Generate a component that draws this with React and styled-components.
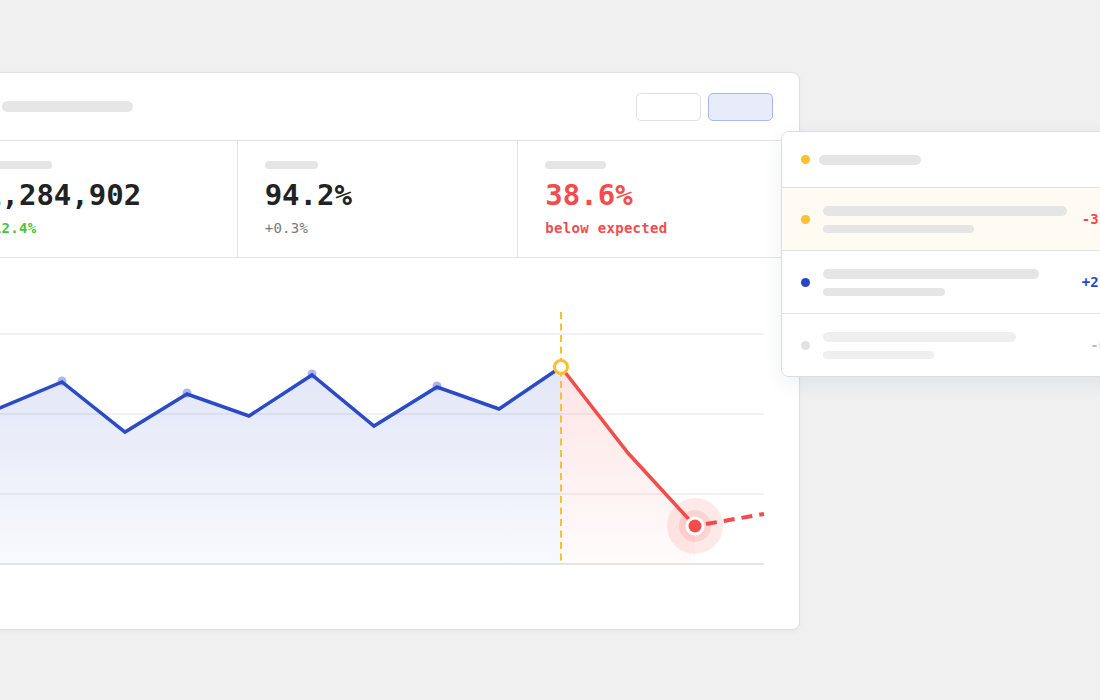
import styled, { createGlobalStyle } from "styled-components";

const GlobalStyle = createGlobalStyle`
  * { box-sizing: border-box; }
  body {
    margin: 0;
    background: #f0f0f0;
    font-family: "DejaVu Sans Mono", "Liberation Mono", monospace;
    overflow: hidden;
  }
`;

const Stage = styled.div`
  position: relative;
  width: 1100px;
  height: 700px;
  overflow: hidden;
  padding-top: 72px;
`;

const Card = styled.div`
  margin-left: -44px;
  width: 844px;
  height: 558px;
  background: #fff;
  border: 1px solid #dedede;
  border-radius: 8px;
  box-shadow: 0 2px 6px rgba(0, 0, 0, 0.03);
  display: flex;
  flex-direction: column;
  overflow: hidden;
`;

const Header = styled.div`
  height: 68px;
  flex-shrink: 0;
  display: flex;
  align-items: center;
  justify-content: space-between;
  padding: 0 26px 0 45px;
  border-bottom: 1px solid #e3e3e3;
`;

const Skeleton = styled.div`
  width: ${(p) => p.$w}px;
  height: ${(p) => p.$h}px;
  border-radius: ${(p) => p.$h / 2}px;
  background: ${(p) => p.$color || "#e5e5e5"};
`;

const Buttons = styled.div`
  display: flex;
  gap: 7px;
`;

const Button = styled.div`
  width: 65px;
  height: 28px;
  border-radius: 5px;
  background: ${(p) => (p.$active ? "#e8ebf9" : "#fff")};
  border: 1.5px solid ${(p) => (p.$active ? "#aab7ef" : "#e0e0e0")};
`;

const Stats = styled.div`
  height: 117px;
  flex-shrink: 0;
  display: grid;
  grid-template-columns: repeat(3, 1fr);
  border-bottom: 1px solid #e3e3e3;
`;

const Stat = styled.div`
  padding: 20px 27px 0;
  border-right: ${(p) => (p.$last ? "none" : "1px solid #e3e3e3")};
`;

const Value = styled.div`
  margin-top: 12px;
  font-size: 29px;
  line-height: 29px;
  font-weight: 700;
  color: ${(p) => p.$color || "#222"};
  white-space: nowrap;
`;

const Sub = styled.div`
  margin-top: 11px;
  font-size: 14px;
  line-height: 14px;
  letter-spacing: 0.3px;
  font-weight: ${(p) => (p.$bold ? 700 : 400)};
  color: ${(p) => p.$color};
  white-space: nowrap;
`;

const ChartArea = styled.div`
  flex: 1;
`;

const Panel = styled.div`
  position: absolute;
  left: 781px;
  top: 131px;
  width: 364px;
  background: #fff;
  border: 1px solid #dcdde3;
  border-radius: 8px;
  box-shadow: 0 6px 20px rgba(30, 40, 80, 0.07);
  overflow: hidden;
`;

const Row = styled.div`
  height: ${(p) => p.$h}px;
  display: flex;
  align-items: center;
  padding: 0 20px 0 19px;
  gap: ${(p) => p.$gap}px;
  background: ${(p) => p.$bg || "#fff"};
  border-top: ${(p) => (p.$first ? "none" : "1px solid #e3e3e3")};
  box-sizing: content-box;
`;

const Dot = styled.div`
  width: 9px;
  height: 9px;
  border-radius: 50%;
  flex-shrink: 0;
  background: ${(p) => p.$color};
`;

const Lines = styled.div`
  flex: 1;
  display: flex;
  flex-direction: column;
  gap: 9px;
`;

const Delta = styled.div`
  width: 44px;
  text-align: right;
  font-size: 14px;
  font-weight: 700;
  color: ${(p) => p.$color};
  white-space: nowrap;
`;

const blue = "#2b4bc6";
const red = "#f44b4b";
const yellow = "#fbc02d";

const bluePts = [
  [-17, 415], [62, 382], [125, 432], [187, 394], [249, 416],
  [312, 375], [374, 426], [437, 387], [499, 409], [561, 367],
];
const redPts = [[561, 367], [628, 453], [695, 526]];
const peaks = [[62, 382], [187, 394], [312, 375], [437, 387]];

const toPath = (pts) => pts.map(([x, y], i) => `${i ? "L" : "M"}${x} ${y}`).join(" ");

const Chart = () => (
  <svg width="842" height="371" viewBox="-43 258 842 371">
    <defs>
      <linearGradient id="blueFill" x1="0" y1="367" x2="0" y2="564" gradientUnits="userSpaceOnUse">
        <stop offset="0" stopColor={blue} stopOpacity="0.14" />
        <stop offset="1" stopColor={blue} stopOpacity="0.03" />
      </linearGradient>
      <linearGradient id="redFill" x1="0" y1="367" x2="0" y2="564" gradientUnits="userSpaceOnUse">
        <stop offset="0" stopColor={red} stopOpacity="0.15" />
        <stop offset="1" stopColor={red} stopOpacity="0.02" />
      </linearGradient>
    </defs>
    {[334, 414, 494].map((y) => (
      <line key={y} x1="-17" x2="764" y1={y} y2={y} stroke="#ececec" strokeWidth="1.5" />
    ))}
    <path d={`${toPath(bluePts)} L561 564 L-17 564 Z`} fill="url(#blueFill)" />
    <path d={`${toPath(redPts)} L695 564 L561 564 Z`} fill="url(#redFill)" />
    <line x1="-17" x2="764" y1="564" y2="564" stroke="#dcdcdc" strokeWidth="1.5" />
    <line x1="561" x2="561" y1="312" y2="565" stroke={yellow} strokeWidth="2" strokeDasharray="7 4.5" />
    {peaks.map(([x, y]) => (
      <circle key={x} cx={x} cy={y - 1} r="4.5" fill={blue} opacity="0.4" />
    ))}
    <path d={toPath(bluePts)} fill="none" stroke={blue} strokeWidth="3.5" />
    <path d={toPath(redPts)} fill="none" stroke={red} strokeWidth="3.5" />
    <line x1="706" y1="524" x2="764" y2="514" stroke={red} strokeWidth="4" strokeDasharray="11 7" />
    <circle cx="561" cy="367" r="6.5" fill="#fff" stroke={yellow} strokeWidth="3" />
    <circle cx="695" cy="526" r="28" fill={red} opacity="0.12" />
    <circle cx="695" cy="526" r="16" fill={red} opacity="0.14" />
    <circle cx="695" cy="526" r="9.5" fill="#fff" />
    <circle cx="695" cy="526" r="6.5" fill={red} />
  </svg>
);

const stats = [
  { w: 68, value: "1,284,902", sub: "+12.4%", subColor: "#4cc13a", bold: true },
  { w: 53, value: "94.2%", sub: "+0.3%", subColor: "#7a7a7a" },
  { w: 61, value: "38.6%", valueColor: "#f24c4c", sub: "below expected", subColor: "#f24c4c", bold: true },
];

const rows = [
  { dot: yellow, bg: "#fffbf2", a: 244, b: 151, delta: "-3.4%", color: "#f24c4c" },
  { dot: "#2448c4", a: 216, b: 122, delta: "+2.1%", color: "#2448c4" },
  { dot: "#e2e2e2", a: 193, b: 111, bar: "#efefef", delta: "-0.8", color: "#bbbbbb" },
];

export default function App() {
  return (
    <>
      <GlobalStyle />
      <Stage>
        <Card>
          <Header>
            <Skeleton $w={131} $h={11} $color="#e6e6e6" />
            <Buttons>
              <Button />
              <Button $active />
            </Buttons>
          </Header>
          <Stats>
            {stats.map((s, i) => (
              <Stat key={i} $last={i === stats.length - 1}>
                <Skeleton $w={s.w} $h={8} />
                <Value $color={s.valueColor}>{s.value}</Value>
                <Sub $color={s.subColor} $bold={s.bold}>{s.sub}</Sub>
              </Stat>
            ))}
          </Stats>
          <ChartArea>
            <Chart />
          </ChartArea>
        </Card>
        <Panel>
          <Row $first $h={55} $gap={9}>
            <Dot $color={yellow} />
            <Skeleton $w={102} $h={10} />
          </Row>
          {rows.map((r, i) => (
            <Row key={i} $h={62} $gap={13} $bg={r.bg}>
              <Dot $color={r.dot} />
              <Lines>
                <Skeleton $w={r.a} $h={10} $color={r.bar} />
                <Skeleton $w={r.b} $h={8} $color={r.bar} />
              </Lines>
              <Delta $color={r.color}>{r.delta}</Delta>
            </Row>
          ))}
        </Panel>
      </Stage>
    </>
  );
}
